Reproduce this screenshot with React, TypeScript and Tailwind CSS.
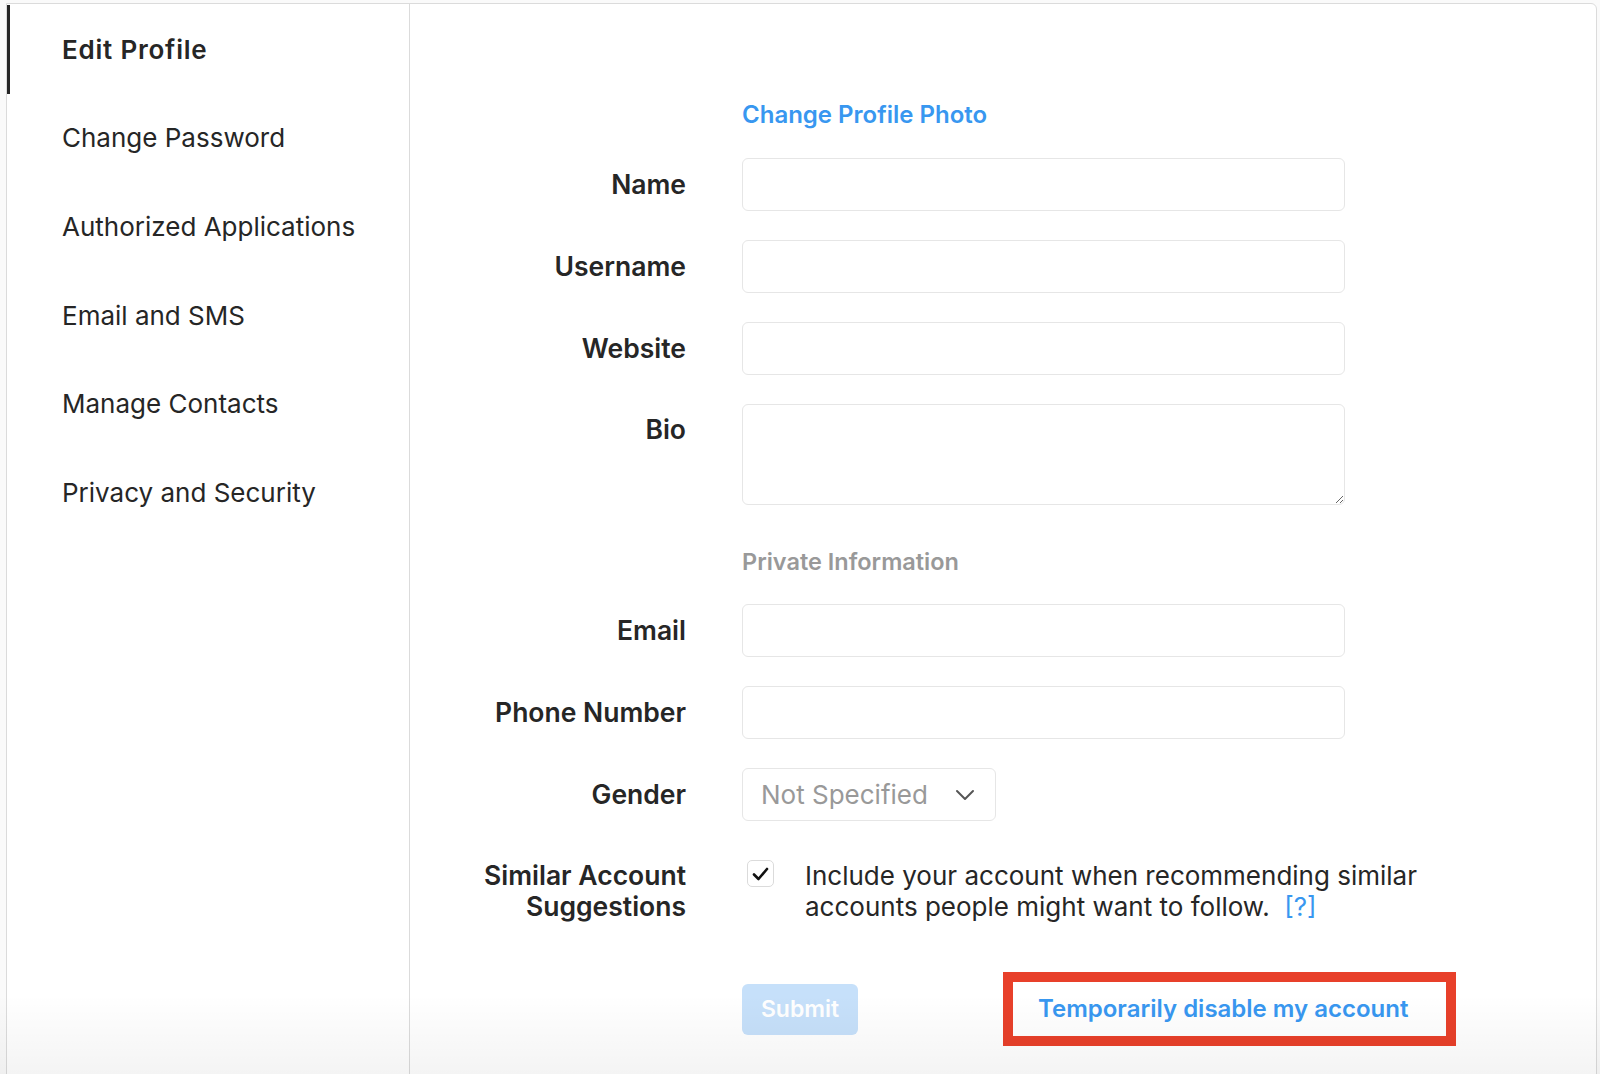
import React from "react";

const FONT = { fontFamily: "Inter, 'Noto Sans', sans-serif" };

function Row({ label, children, top = false }: { label: React.ReactNode; children: React.ReactNode; top?: boolean }) {
  return (
    <div className={`flex ${top ? "items-start" : "items-center"}`}>
      <div className={`w-[276px] shrink-0 text-right text-[26.5px] font-semibold leading-[31px] text-[#262626] ${top ? "pt-[10px]" : ""}`}>
        {label}
      </div>
      <div className="ml-[56px]">{children}</div>
    </div>
  );
}

function TextInput() {
  return <input type="text" className="block h-[53px] w-[603px] rounded-[6px] border border-[#e6e6e6] bg-white outline-none" />;
}

export default function App() {
  const nav = ["Edit Profile", "Change Password", "Authorized Applications", "Email and SMS", "Manage Contacts", "Privacy and Security"];
  return (
    <div className="relative h-[1074px] w-[1600px] overflow-hidden bg-[#fafafa] pt-[3px] pl-[6px]" style={FONT}>
      <div className="flex h-[1200px] w-[1591px] rounded-tr-[6px] border border-[#dbdbdb] bg-white">
        <aside className="w-[403px] shrink-0 border-r border-[#dbdbdb]">
          <ul className="pt-[1px]">
            {nav.map((n, i) => (
              <li
                key={n}
                className={`flex h-[88.6px] items-center border-l-[3px] pl-[52px] text-[26px] text-[#262626] ${i === 0 ? "border-[#262626] font-semibold tracking-[0.03em]" : "border-transparent"}`}
              >
                {n}
              </li>
            ))}
          </ul>
        </aside>
        <main className="flex-1 pt-[93px]">
          <div className="flex">
            <div className="w-[276px] shrink-0" />
            <div className="ml-[56px] text-[24px] font-semibold leading-[36px] text-[#3897f0]">Change Profile Photo</div>
          </div>
          <div className="mt-[25px] flex flex-col gap-[29px]">
            <Row label="Name"><TextInput /></Row>
            <Row label="Username"><TextInput /></Row>
            <Row label="Website"><TextInput /></Row>
            <Row label="Bio" top>
              <textarea className="block h-[101px] w-[603px] resize-y rounded-[6px] border border-[#e6e6e6] bg-white outline-none" />
            </Row>
          </div>
          <div className="mt-[41px] flex">
            <div className="w-[276px] shrink-0" />
            <div className="ml-[56px] text-[23.5px] font-semibold leading-[32px] text-[#999999]">Private Information</div>
          </div>
          <div className="mt-[26px] flex flex-col gap-[29px]">
            <Row label="Email"><TextInput /></Row>
            <Row label="Phone Number"><TextInput /></Row>
            <Row label="Gender">
              <div className="flex h-[53px] w-[254px] items-center justify-between rounded-[6px] border border-[#e6e6e6] bg-white pl-[18px] pr-[20px] text-[26px] text-[#999999]">
                <span>Not Specified</span>
                <svg width="20" height="12" viewBox="0 0 20 12" fill="none">
                  <path d="M2 2 L10 10 L18 2" stroke="#555" strokeWidth="2" strokeLinecap="round" strokeLinejoin="round" />
                </svg>
              </div>
            </Row>
          </div>
          <div className="mt-[39px] flex items-start">
            <div className="w-[276px] shrink-0 text-right text-[26.5px] font-semibold leading-[31px] text-[#262626]">
              Similar Account
              <br />
              Suggestions
            </div>
            <div className="ml-[61px] flex items-start">
              <div className="flex h-[27px] w-[27px] shrink-0 items-center justify-center rounded-[5px] border border-[#dbdbdb] bg-white">
                <svg width="17" height="14" viewBox="0 0 17 14" fill="none">
                  <path d="M2 7.5 L6.5 12 L15 2" stroke="#111" strokeWidth="2.6" strokeLinecap="round" strokeLinejoin="round" />
                </svg>
              </div>
              <p className="ml-[31px] w-[640px] text-[26px] leading-[31px] text-[#262626]">
                Include your account when recommending similar accounts people might want to follow.{"\u00a0\u00a0"}
                <span className="text-[#3897f0]">[?]</span>
              </p>
            </div>
          </div>
          <div className="mt-[50px] flex items-center">
            <div className="w-[276px] shrink-0" />
            <button className="ml-[56px] h-[51px] w-[116px] rounded-[6px] bg-[#c6e0fa] text-[23px] font-semibold text-white">Submit</button>
            <div className="ml-[145px] flex h-[74px] w-[453px] items-center border-[10px] border-[#e8402a] bg-white pl-[25px]">
              <span className="text-[24px] font-semibold text-[#3897f0]">Temporarily disable my account</span>
            </div>
          </div>
        </main>
      </div>
      <div className="pointer-events-none absolute bottom-0 left-0 h-[80px] w-full bg-gradient-to-b from-transparent to-[rgba(0,0,0,0.045)]" />
    </div>
  );
}
